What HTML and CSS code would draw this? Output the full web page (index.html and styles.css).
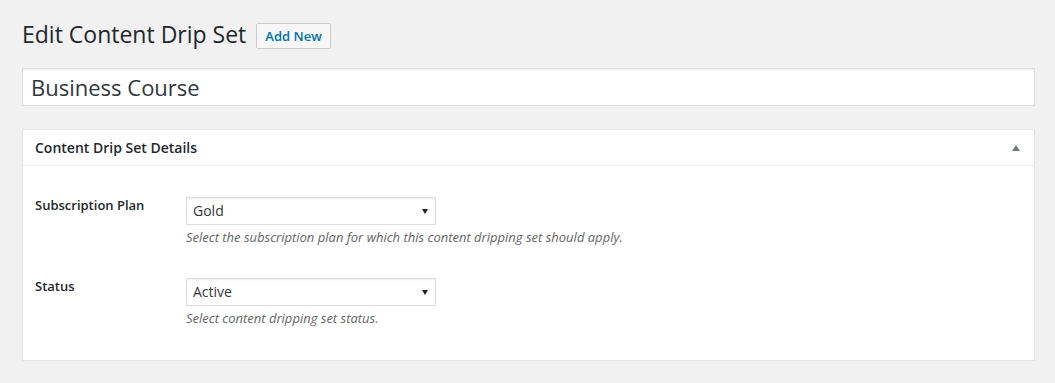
FILE: index.html
```html
<!DOCTYPE html>
<html lang="en">
<head>
<meta charset="utf-8">
<title>Edit Content Drip Set</title>
<link rel="stylesheet" href="styles.css">
</head>
<body>
<div class="wrap">
  <div class="title-row">
    <h1 class="page-title">Edit Content Drip Set</h1>
    <a class="add-new" href="#">Add New</a>
  </div>
  <div class="title-input">Business Course</div>
  <div class="postbox">
    <div class="postbox-head">
      <h2 class="hndle">Content Drip Set Details</h2>
      <span class="toggle">
        <svg width="8" height="6" viewBox="0 0 8 6"><polygon points="4,0 8,6 0,6" fill="#72777c"/></svg>
      </span>
    </div>
    <div class="inside">
      <div class="row">
        <div class="label">Subscription Plan</div>
        <div class="field">
          <div class="select"><span>Gold</span><svg width="6" height="5" viewBox="0 0 6 5"><polygon points="0,0 6,0 3,5" fill="#222"/></svg></div>
          <p class="desc">Select the subscription plan for which this content dripping set should apply.</p>
        </div>
      </div>
      <div class="row">
        <div class="label">Status</div>
        <div class="field">
          <div class="select"><span>Active</span><svg width="6" height="5" viewBox="0 0 6 5"><polygon points="0,0 6,0 3,5" fill="#222"/></svg></div>
          <p class="desc">Select content dripping set status.</p>
        </div>
      </div>
    </div>
  </div>
</div>
</body>
</html>
```

FILE: styles.css
```css
html, body {
  margin: 0;
  padding: 0;
  background: #f1f1f1;
  font-family: "Open Sans", sans-serif;
  color: #444;
}

.wrap {
  padding: 20px 20px 0 22px;
}

.title-row {
  display: flex;
  align-items: flex-start;
  gap: 10px;
}

.page-title {
  margin: 0;
  font-size: 23px;
  font-weight: 400;
  line-height: 29px;
  color: #23282d;
}

.add-new {
  margin-top: 3px;
  padding: 4px 8px;
  border: 1px solid #ccc;
  border-radius: 2px;
  background: #f7f7f7;
  color: #0073aa;
  font-size: 13px;
  font-weight: 600;
  line-height: 16px;
  text-decoration: none;
}

.title-input {
  margin-top: 19px;
  padding: 3px 8px;
  border: 1px solid #ddd;
  background: #fff;
  box-shadow: inset 0 1px 2px rgba(0,0,0,.07);
  font-size: 22px;
  line-height: 30px;
  color: #32373c;
}

.postbox {
  margin-top: 23px;
  background: #fff;
  border: 1px solid #e5e5e5;
  box-shadow: 0 1px 1px rgba(0,0,0,.04);
}

.postbox-head {
  display: flex;
  align-items: center;
  justify-content: space-between;
  border-bottom: 1px solid #eee;
}

.hndle {
  margin: 0;
  padding: 8px 12px;
  font-size: 14px;
  font-weight: 600;
  line-height: 19px;
  color: #23282d;
}

.toggle {
  display: flex;
  width: 36px;
  justify-content: center;
  align-items: center;
}

.toggle svg {
  display: block;
}

.inside {
  padding: 31px 12px 33px;
  display: flex;
  flex-direction: column;
  gap: 32px;
}

.row {
  display: grid;
  grid-template-columns: 151px 1fr;
}

.label {
  padding-top: 1px;
  font-size: 13px;
  font-weight: 600;
  line-height: 14px;
  color: #23282d;
}

.select {
  box-sizing: border-box;
  width: 250px;
  height: 28px;
  display: flex;
  align-items: center;
  justify-content: space-between;
  padding: 0 7px 0 6px;
  border: 1px solid #ddd;
  background: #fff;
  box-shadow: inset 0 1px 2px rgba(0,0,0,.07);
  font-size: 14px;
  line-height: 26px;
  color: #32373c;
}

.select svg {
  display: block;
}

.desc {
  margin: 3px 0 0;
  font-size: 13px;
  font-style: italic;
  line-height: 18px;
  color: #666;
}
```
